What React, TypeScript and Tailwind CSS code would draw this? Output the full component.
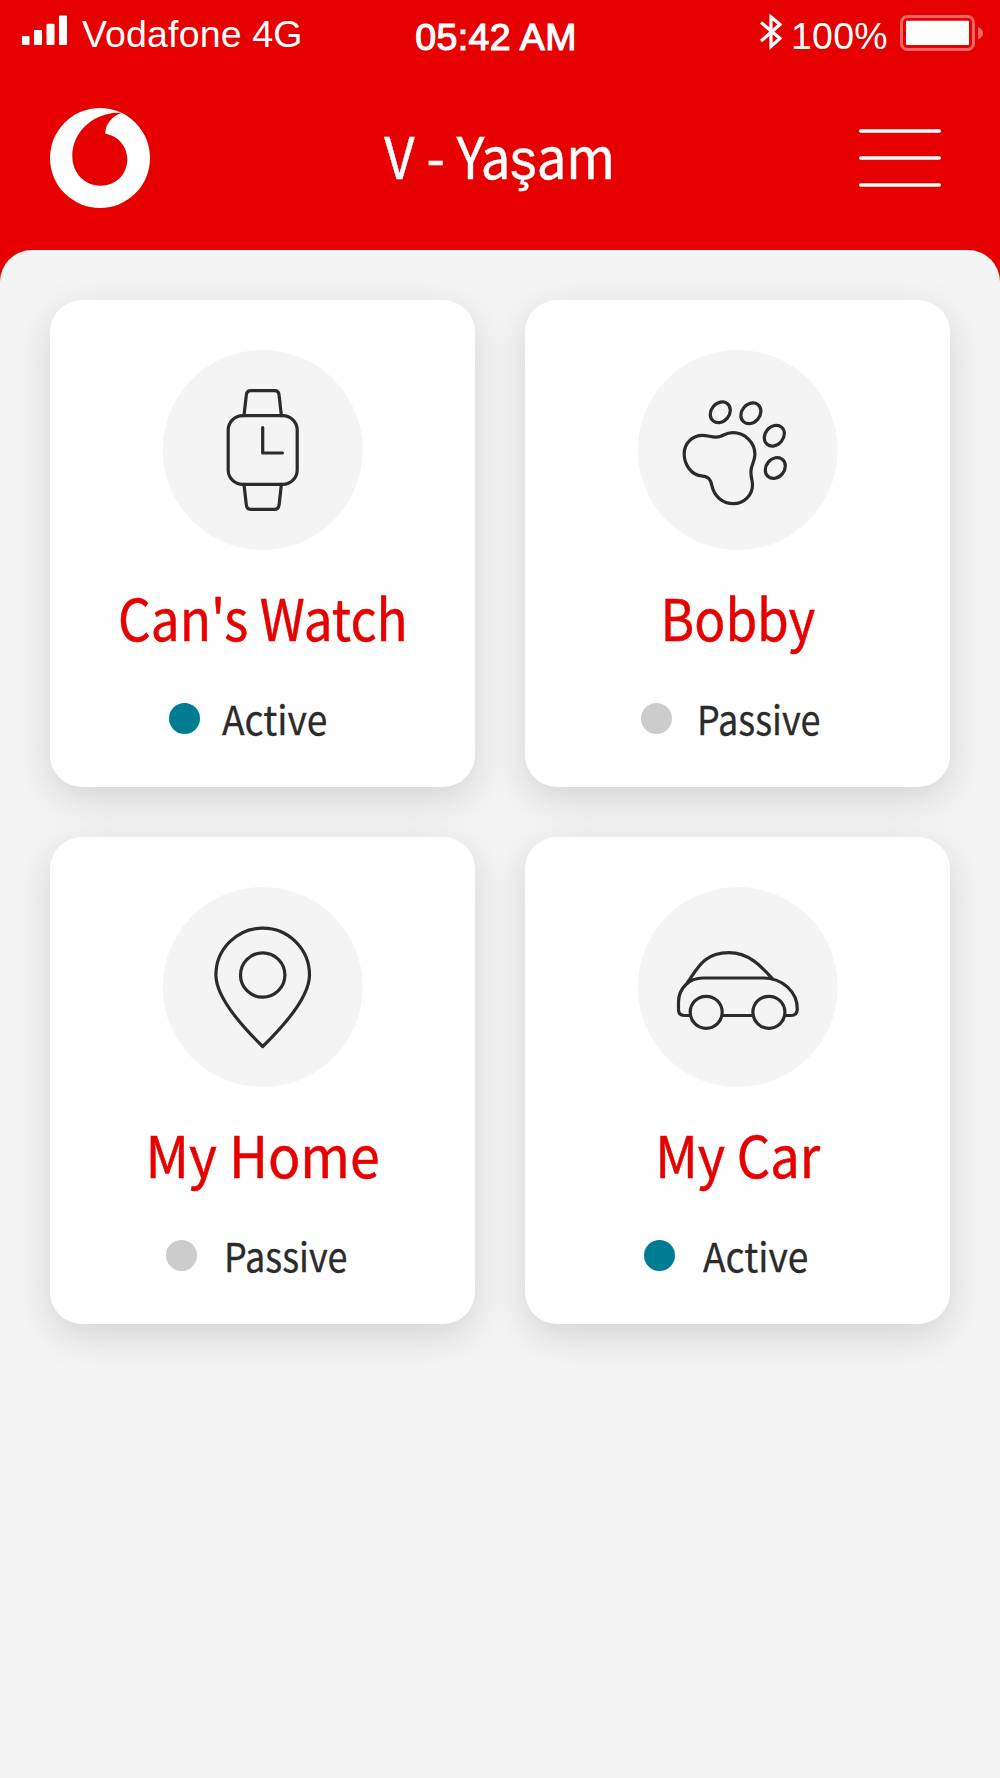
import type { ReactNode } from "react";

const WatchIcon = () => (
  <>
    <rect x="65.5" y="65.6" width="69" height="68.8" rx="14.5" />
    <path d="M81.3 65.6 83.6 45.2Q84 40.7 88.2 40.7H111.8Q116 40.7 116.4 45.2L118.7 65.6" />
    <path d="M81.3 134.4 83.6 154.8Q84 159.3 88.2 159.3H111.8Q116 159.3 116.4 154.8L118.7 134.4" />
    <path d="M100 77.5V103H119.7" />
  </>
);

const PawIcon = () => (
  <>
    <ellipse cx="82.6" cy="62.3" rx="11.2" ry="9.1" transform="rotate(-50 82.6 62.3)" />
    <ellipse cx="113.2" cy="63.3" rx="11.2" ry="9.1" transform="rotate(-50 113.2 63.3)" />
    <ellipse cx="136.6" cy="85.7" rx="11.2" ry="9.1" transform="rotate(-50 136.6 85.7)" />
    <ellipse cx="137.6" cy="118" rx="11.2" ry="9.1" transform="rotate(-50 137.6 118)" />
    <path d="M46.5 103.7C46.5 93.5 54.7 85.3 64.8 85.3C71 85.3 76 88.5 82.5 86.5C86.5 85.2 88.5 82.7 95.2 82.7C107.3 82.7 117.2 92.5 117.2 104.3C117.2 112.5 113.2 114 113.2 122C113.2 128 114.8 130 114.8 134.7C114.8 145.2 106.3 153.7 95.8 153.7C85 153.7 76.5 146.5 74.2 135.7C73 129.5 71 126.5 63.5 125.8C53.5 124.8 46.5 114.5 46.5 103.7Z" />
  </>
);

const PinIcon = () => (
  <>
    <path d="M100 159.5C78 138 53.2 110 53.2 88A46.8 46.8 0 0 1 146.8 88C146.8 110 122 138 100 159.5Z" />
    <circle cx="100" cy="88" r="22.2" />
  </>
);

const CarIcon = () => (
  <>
    <circle cx="68.5" cy="125.3" r="16" />
    <circle cx="131.2" cy="125.3" r="16" />
    <path d="M84.5 128.5H115.2" />
    <path d="M52.5 128.5H46.5Q40.8 128.5 40.8 122.5V115C40.8 101 52 91 65 91H125.8C145 91 159.6 105 159.6 122Q159.3 128.5 153.5 128.5H147.2" />
    <path d="M49.8 95.5C60 81 66.5 65.7 91 65.7C112 65.7 124.5 80.5 134.8 91.8" />
  </>
);

type Service = {
  name: string;
  nameClass: string;
  status: string;
  statusClass: string;
  dotClass: string;
  icon: ReactNode;
};

const services: Service[] = [
  {
    name: "Can's Watch",
    nameClass: "scale-x-[0.9]",
    status: "Active",
    statusClass: "ml-[22px] scale-x-[0.93]",
    dotClass: "ml-[119px] bg-[#007c92]",
    icon: <WatchIcon />,
  },
  {
    name: "Bobby",
    nameClass: "scale-x-[0.9]",
    status: "Passive",
    statusClass: "ml-[25.5px] scale-x-[0.9]",
    dotClass: "ml-[115.5px] bg-[#cccccc]",
    icon: <PawIcon />,
  },
  {
    name: "My Home",
    nameClass: "scale-x-[0.94]",
    status: "Passive",
    statusClass: "ml-[27.5px] scale-x-[0.9]",
    dotClass: "ml-[115.5px] bg-[#cccccc]",
    icon: <PinIcon />,
  },
  {
    name: "My Car",
    nameClass: "scale-x-[0.92]",
    status: "Active",
    statusClass: "ml-[28px] scale-x-[0.93]",
    dotClass: "ml-[118.5px] bg-[#007c92]",
    icon: <CarIcon />,
  },
];

const ServiceCard = ({ service }: { service: Service }) => (
  <article className="flex h-[487px] flex-col items-center rounded-[32px] bg-white pt-[50px] shadow-[0_12px_38px_rgba(0,0,0,0.135)]">
    <div className="size-[200px] shrink-0">
      <svg
        viewBox="0.3 0 200 200"
        className="size-full overflow-visible fill-none stroke-[#2b2b2b] stroke-[3.2]"
        strokeLinecap="round"
        strokeLinejoin="round"
      >
        <circle cx="100" cy="100" r="100" className="fill-[#f4f4f4] stroke-none" />
        {service.icon}
      </svg>
    </div>
    <h2
      className={`mt-[26px] h-20 text-[57px] leading-[80px] whitespace-nowrap text-[#e60000] [-webkit-text-stroke:0.5px_#e60000] ${service.nameClass}`}
    >
      {service.name}
    </h2>
    <div className="mt-[32px] flex h-[60px] w-full items-center">
      <span className={`size-[31px] shrink-0 rounded-full ${service.dotClass}`} />
      <span
        className={`origin-left pb-px text-[40px] leading-[60px] text-[#2b2b2b] [-webkit-text-stroke:0.3px_#2b2b2b] ${service.statusClass}`}
      >
        {service.status}
      </span>
    </div>
  </article>
);

const StatusBar = () => (
  <div className="grid h-[66px] grid-cols-3 font-['Liberation_Sans',Arial,sans-serif] text-[37.5px] leading-[40px]">
    <div className="flex items-start pl-[22px]">
      <svg viewBox="0 0 46 30" className="mt-[15px] h-[30px] w-[46px] shrink-0 fill-white">
        <rect x="0" y="21" width="7.5" height="9" rx="1" />
        <rect x="12" y="15" width="8" height="15" rx="1" />
        <rect x="24.5" y="8.7" width="8" height="21.3" rx="1" />
        <rect x="37" y="0.5" width="8" height="29.5" rx="1" />
      </svg>
      <span className="mt-[14px] ml-[14px] tracking-[0.15px] whitespace-nowrap">Vodafone 4G</span>
    </div>
    <div className="flex items-start justify-center">
      <span className="mt-[17px] mr-[8px] tracking-[0.4px] whitespace-nowrap [-webkit-text-stroke:1.2px_white]">
        05:42 AM
      </span>
    </div>
    <div className="flex items-start justify-end pr-[17px]">
      <svg viewBox="0 0 22 38" className="mt-[12.5px] h-[38px] w-[22px] shrink-0 fill-none stroke-white stroke-[3.2]">
        <path d="M1 9.5 20 25.5 11 33.5V4L20 11.5 1 28" />
      </svg>
      <span className="mt-[16px] ml-[9px] tracking-[0.3px] whitespace-nowrap">100%</span>
      <svg viewBox="0 0 83 36" className="mt-[14.5px] ml-[12px] h-[36px] w-[83px] shrink-0">
        <rect x="1.5" y="1.5" width="72" height="33" rx="6" className="fill-none stroke-white/40 stroke-3" />
        <rect x="6" y="5.7" width="63" height="24.3" rx="1" className="fill-white" />
        <path d="M78 12Q83 14 83 18T78 24.5Z" className="fill-white/40" />
      </svg>
    </div>
  </div>
);

const BrandMark = () => (
  <svg viewBox="0 0 100 100" className="size-[100px] shrink-0">
    <circle cx="50" cy="50" r="50" className="fill-white" />
    <path
      d="M71.5 5C66 3.8 56 5.5 46.5 10C32 17.5 22.3 31.5 22.3 48C22.3 65 34.5 77.7 50.7 77.7C66 77.7 77.3 66.5 77.3 51.3C77.3 38 68 28 55.3 25.7C55.3 15.5 62.5 8 71.5 5Z"
      className="fill-[#e60000]"
    />
  </svg>
);

const MenuIcon = () => (
  <svg viewBox="0 0 82 58" className="h-[58px] w-[82px] stroke-white stroke-[3.4]" strokeLinecap="round">
    <path d="M1.7 2H80.3M1.7 29H80.3M1.7 56H80.3" />
  </svg>
);

export default function App() {
  return (
    <div className="flex h-[1778px] w-[1000px] flex-col overflow-hidden bg-[#e60000] font-['Noto_Sans_CJK_SC',sans-serif] text-white">
      <header className="h-[250px] shrink-0">
        <StatusBar />
        <div className="flex h-[184px] items-center justify-between pr-[59px] pl-[50px]">
          <BrandMark />
          <h1 className="mr-[9px] scale-x-[0.925] pb-[9px] text-[57px] leading-[80px] whitespace-nowrap [-webkit-text-stroke:0.5px_white]">
            V - Yaşam
          </h1>
          <button aria-label="Menu">
            <MenuIcon />
          </button>
        </div>
      </header>
      <main className="grow rounded-t-[32px] bg-[#f4f4f4] p-[50px]">
        <div className="grid grid-cols-2 gap-[50px]">
          {services.map((service) => (
            <ServiceCard key={service.name} service={service} />
          ))}
        </div>
      </main>
    </div>
  );
}
